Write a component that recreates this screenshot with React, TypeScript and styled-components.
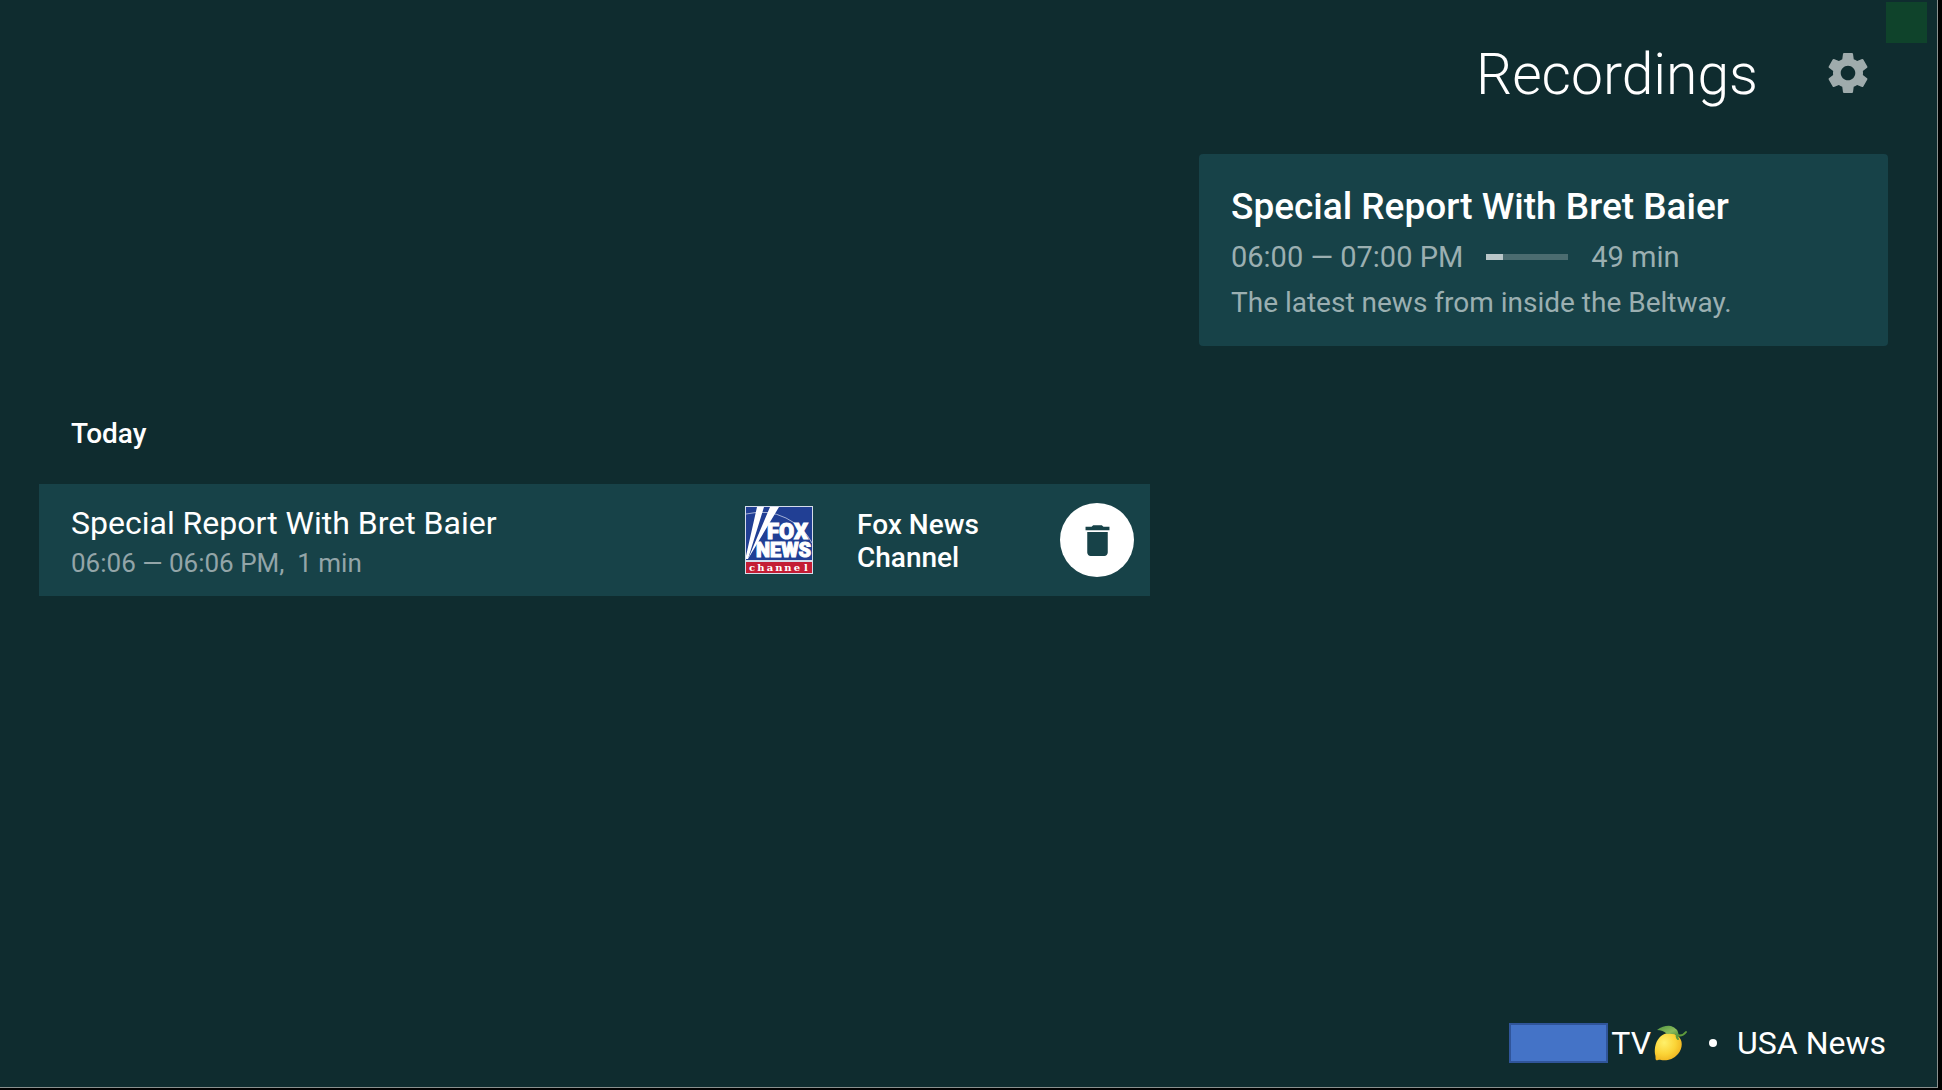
import React from "react";
import styled, { createGlobalStyle } from "styled-components";

const GlobalStyle = createGlobalStyle`
  *, *::before, *::after { box-sizing: border-box; }
  body {
    margin: 0;
    background: #000;
    color: #fff;
    font-family: Roboto, "Noto Sans", sans-serif;
  }
  h1, h2, h3, p, ul { margin: 0; padding: 0; }
`;

const Frame = styled.div`
  display: flex;
  min-height: 100vh;
  padding: 0 4px 2px 0;
`;

const Screen = styled.div`
  position: relative;
  flex: 1;
  display: flex;
  flex-direction: column;
  padding: 0 49px 20px 39px;
  background: #0f2c2f;
  border-right: 1px solid #8a908f;
  border-bottom: 1px solid #8a908f;
`;

const StatusSquare = styled.div`
  position: absolute;
  top: 2px;
  right: 10px;
  width: 41px;
  height: 41px;
  background: #0f432b;
`;

const Header = styled.header`
  display: flex;
  align-items: center;
  justify-content: flex-end;
  gap: 62px;
  height: 154px;
  padding: 0 12px 8px 0;
`;

const PageTitle = styled.h1`
  padding-top: 4px;
  font-size: 57px;
  line-height: 64px;
  font-weight: 300;
`;

const IconButton = styled.button`
  display: flex;
  align-items: center;
  justify-content: center;
  width: 56px;
  height: 56px;
  padding: 0;
  border: 0;
  border-radius: 50%;
  background: none;
  color: #9fabac;
`;

const RoundButton = styled(IconButton)`
  width: 74px;
  height: 74px;
  background: #fff;
  color: #174248;
`;

const Content = styled.main`
  flex: 1;
  display: grid;
  grid-template-columns: minmax(0, 1111fr) minmax(0, 689fr);
  grid-template-rows: auto 1fr;
  column-gap: 49px;
  row-gap: 64px;
`;

const ProgramCard = styled.article`
  grid-column: 2;
  display: flex;
  flex-direction: column;
  gap: 8px;
  padding: 30px 32px 24px;
  border-radius: 4px;
  background: #174248;
`;

const CardTitle = styled.h2`
  font-size: 37px;
  line-height: 46px;
  font-weight: 500;
`;

const CardLine = styled.p`
  font-size: 28px;
  line-height: 38px;
  color: #9bafb1;
`;

const CardTime = styled(CardLine)`
  display: flex;
  align-items: center;
  gap: 23px;
  font-size: 29px;
`;

const Progress = styled.span`
  width: 82px;
  height: 6px;
  background: #4b6c70;
`;

const ProgressFill = styled.span`
  display: block;
  height: 100%;
  background: #b9c6c8;
`;

const Day = styled.section`
  grid-column: 1;
  grid-row: 2;
`;

const DayTitle = styled.h2`
  padding: 7px 32px 33px;
  font-size: 28px;
  line-height: 34px;
  font-weight: 500;
`;

const List = styled.ul`
  list-style: none;
`;

const Row = styled.li`
  display: flex;
  align-items: center;
  height: 112px;
  padding: 0 16px 0 32px;
  background: #174248;
`;

const RowText = styled.div`
  flex: 1;
  min-width: 0;
  padding-top: 6px;
`;

const RowTitle = styled.h3`
  font-size: 32px;
  line-height: 40px;
  font-weight: 400;
`;

const RowTime = styled.p`
  font-size: 26px;
  line-height: 40px;
  color: #93a5a8;
  white-space: pre;
`;

const Channel = styled.p`
  width: 160px;
  margin: 0 43px;
  padding-top: 2px;
  font-size: 28px;
  line-height: 33px;
  font-weight: 500;
`;

const Footer = styled.footer`
  display: flex;
  align-items: center;
  justify-content: flex-end;
  height: 48px;
  padding-right: 2px;
  font-size: 32px;
  line-height: 40px;
`;

const Redacted = styled.span`
  width: 99px;
  height: 40px;
  margin-right: 3px;
  border: 2px solid #30559a;
  background: #4473c7;
`;

const Dot = styled.span`
  width: 8px;
  height: 8px;
  margin: 0 20px;
  border-radius: 50%;
  background: #fff;
`;

const GearIcon = () => (
  <svg width="50" height="50" viewBox="0 0 24 24" fill="currentColor" aria-hidden="true">
    <path d="M19.14 12.94c.04-.3.06-.61.06-.94 0-.32-.02-.64-.07-.94l2.03-1.58c.18-.14.23-.41.12-.61l-1.92-3.32c-.12-.22-.37-.29-.59-.22l-2.39.96c-.5-.38-1.03-.7-1.62-.94l-.36-2.54c-.04-.24-.24-.41-.48-.41h-3.84c-.24 0-.43.17-.47.41l-.36 2.54c-.59.24-1.13.57-1.62.94l-2.39-.96c-.22-.08-.47 0-.59.22L2.74 8.87c-.12.21-.08.47.12.61l2.03 1.58c-.05.3-.09.63-.09.94s.02.64.07.94l-2.03 1.58c-.18.14-.23.41-.12.61l1.92 3.32c.12.22.37.29.59.22l2.39-.96c.5.38 1.03.7 1.62.94l.36 2.54c.05.24.24.41.48.41h3.84c.24 0 .44-.17.47-.41l.36-2.54c.59-.24 1.13-.56 1.62-.94l2.39.96c.22.08.47 0 .59-.22l1.92-3.32c.12-.22.07-.47-.12-.61l-2.01-1.58zM12 15.5c-1.93 0-3.5-1.57-3.5-3.5s1.57-3.5 3.5-3.5 3.5 1.57 3.5 3.5-1.57 3.5-3.5 3.5z" />
  </svg>
);

const TrashIcon = () => (
  <svg width="41" height="41" viewBox="0 0 24 24" fill="currentColor" aria-hidden="true">
    <path d="M6 19c0 1.100.9 2 2 2h8c1.100 0 2-.9 2-2V7H6v12zM19 4h-3.500l-1-1h-5l-1 1H5v2h14V4z" />
  </svg>
);

const FoxLogo = () => (
  <svg width="70" height="70" viewBox="0 0 70 70" role="img" aria-label="Fox News Channel logo">
    <rect x="1" y="1" width="68" height="68" fill="#d5dcea" />
    <rect x="2" y="2" width="66" height="53" fill="#213f94" />
    <rect x="2" y="57" width="66" height="11" fill="#c41d35" />
    <path d="M2 9Q24 4 42 13T68 38" fill="none" stroke="#a3b0d6" strokeWidth="1" />
    <path d="M13 2h7L4 54H2v-3zM26 2h9L4 54z" fill="#fff" />
    <text fill="#fff" stroke="#fff" strokeWidth="1" fontFamily="Roboto, sans-serif" fontWeight="900">
      <tspan x="23" y="34" fontSize="22">FOX</tspan>
      <tspan x="12" y="52" fontSize="20">NEWS</tspan>
    </text>
    <g fill="#fff" fontFamily="'DejaVu Serif', serif" fontWeight="700" fontSize="10" textAnchor="middle">
      {"channel".split("").map((letter, i) => (
        <text key={i} x={8 + i * 9} y="66">{letter}</text>
      ))}
    </g>
  </svg>
);

const LemonIcon = () => (
  <svg width="38" height="40" viewBox="0 0 38 40" role="img" aria-label="lemon">
    <defs>
      <radialGradient id="peel" cx="0.35" cy="0.35" r="0.7">
        <stop offset="0" stopColor="#fff06a" />
        <stop offset="0.6" stopColor="#fbd437" />
        <stop offset="1" stopColor="#f0b41f" />
      </radialGradient>
      <linearGradient id="leaf" x1="0" y1="0" x2="1" y2="1">
        <stop offset="0" stopColor="#4f9440" />
        <stop offset="0.6" stopColor="#8bbb5c" />
        <stop offset="1" stopColor="#558e3c" />
      </linearGradient>
    </defs>
    <path d="M27 13C32 17 32 25 27 31C22 37 15 38 10 37C8 36 6 38 5 37C4 36 5 34 4 31C3 25 5 17 10 13C15 9 22 9 27 13Z" fill="url(#peel)" />
    <path d="M26 12Q31 14 35 9M26 11Q25 14 27 16" fill="none" stroke="#5f9b3c" strokeWidth="2" strokeLinecap="round" />
    <path d="M6 7Q13 2 20 3Q27 5 28 13Q22 10 16 11Q12 7 6 7Z" fill="url(#leaf)" />
  </svg>
);

const nowPlaying = {
  title: "Special Report With Bret Baier",
  time: "06:00 — 07:00 PM",
  progress: 20,
  left: "49 min",
  description: "The latest news from inside the Beltway.",
};

const recordings = [
  {
    title: "Special Report With Bret Baier",
    time: "06:06 — 06:06 PM,  1 min",
    channel: "Fox News Channel",
  },
];

export default function App() {
  return (
    <Frame>
      <GlobalStyle />
      <Screen>
        <StatusSquare />
        <Header>
          <PageTitle>Recordings</PageTitle>
          <IconButton type="button" aria-label="Settings">
            <GearIcon />
          </IconButton>
        </Header>
        <Content>
          <ProgramCard>
            <CardTitle>{nowPlaying.title}</CardTitle>
            <CardTime>
              <span>{nowPlaying.time}</span>
              <Progress>
                <ProgressFill style={{ width: `${nowPlaying.progress}%` }} />
              </Progress>
              <span>{nowPlaying.left}</span>
            </CardTime>
            <CardLine>{nowPlaying.description}</CardLine>
          </ProgramCard>
          <Day>
            <DayTitle>Today</DayTitle>
            <List>
              {recordings.map((item) => (
                <Row key={item.title}>
                  <RowText>
                    <RowTitle>{item.title}</RowTitle>
                    <RowTime>{item.time}</RowTime>
                  </RowText>
                  <FoxLogo />
                  <Channel>{item.channel}</Channel>
                  <RoundButton type="button" aria-label="Delete recording">
                    <TrashIcon />
                  </RoundButton>
                </Row>
              ))}
            </List>
          </Day>
        </Content>
        <Footer>
          <Redacted />
          <span>TV</span>
          <LemonIcon />
          <Dot />
          <span>USA News</span>
        </Footer>
      </Screen>
    </Frame>
  );
}
